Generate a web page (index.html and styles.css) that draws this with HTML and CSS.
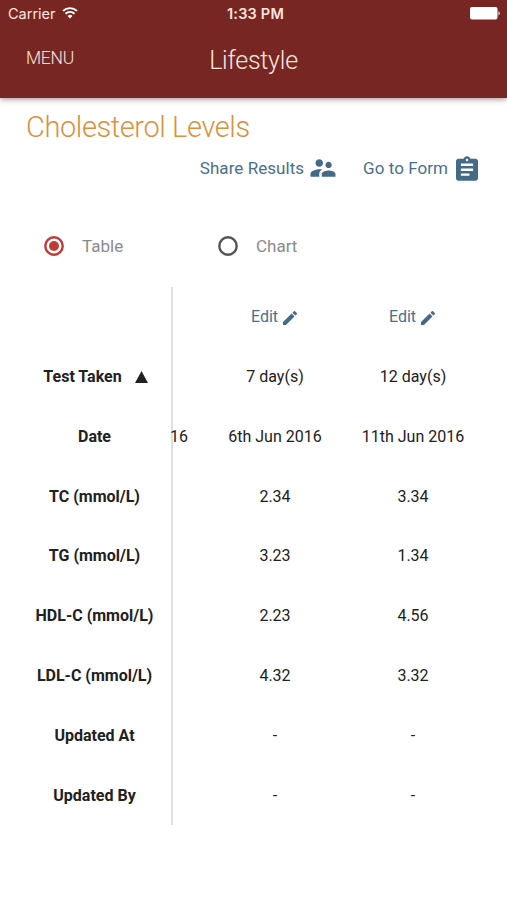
FILE: index.html
```html
<!DOCTYPE html>
<html lang="en">
<head>
<meta charset="utf-8">
<title>Lifestyle</title>
<link rel="stylesheet" href="styles.css">
</head>
<body>
<header class="header">
  <div class="status">
    <div class="carrier"><span>Carrier</span>
      <svg class="wifi" viewBox="0 0 16 12"><path d="M8 11.5 5.6 8.9a3.5 3.5 0 0 1 4.8 0z" fill="#fff"/><path d="M3.5 6.7a6.5 6.5 0 0 1 9 0M1 3.9a10.2 10.2 0 0 1 14 0" fill="none" stroke="#fff" stroke-width="1.9"/></svg>
    </div>
    <div class="clock">1:33 PM</div>
    <div class="power"><svg class="battery" viewBox="0 0 31 13"><rect width="27.5" height="12.5" rx="2" fill="#fff"/><path d="M28.5 4q2.500 2.250 0 4.500z" fill="#fff"/></svg></div>
  </div>
  <nav class="nav"><span class="menu">MENU</span><span class="title">Lifestyle</span><span></span></nav>
</header>
<main class="main">
  <h1 class="heading">Cholesterol Levels</h1>
  <div class="actions">
    <a class="action share"><span>Share Results</span><svg class="people" viewBox="0 0 24 24"><path d="M16.500 12c1.380 0 2.490-1.120 2.490-2.500S17.880 7 16.500 7 14 8.120 14 9.500s1.120 2.500 2.500 2.500zM9 11c1.660 0 2.990-1.340 2.990-3S10.660 5 9 5 6 6.340 6 8s1.340 3 3 3zm7.500 3c-1.830 0-5.500.920-5.500 2.750V19h11v-2.250c0-1.830-3.670-2.750-5.500-2.750zM9 13c-2.330 0-7 1.170-7 3.750V19h7v-2.250c0-.850.330-2.340 2.370-3.470C10.500 13.100 9.660 13 9 13z"/></svg></a>
    <a class="action form"><span>Go to Form</span><svg class="clipboard" viewBox="3 1 18 20"><path fill-rule="evenodd" d="M19 3h-4.180C14.400 1.840 13.300 1 12 1s-2.400.840-2.820 2H5c-1.100 0-2 .900-2 2v14c0 1.100.900 2 2 2h14c1.100 0 2-.900 2-2V5c0-1.100-.900-2-2-2zm-7 0c.550 0 1 .450 1 1s-.450 1-1 1-1-.450-1-1 .450-1 1-1zm2 14H7v-2h7v2zm3-4H7v-2h10v2zm0-4H7V7h10v2z"/></svg></a>
  </div>
  <div class="choices">
    <label class="choice"><svg class="radio radio-on" viewBox="0 0 20 20"><circle class="ring" cx="10" cy="10" r="8.700"/><circle class="dot" cx="10" cy="10" r="5"/></svg>Table</label>
    <label class="choice"><svg class="radio" viewBox="0 0 20 20"><circle class="ring" cx="10" cy="10" r="8.700"/></svg>Chart</label>
  </div>
  <section class="results">
    <div class="column labels">
      <div></div><div><span>Test Taken</span><svg class="sort" viewBox="0 0 13 12"><path d="M6.500 0 13 12H0z"/></svg></div><div>Date</div><div>TC (mmol/L)</div><div>TG (mmol/L)</div><div>HDL-C (mmol/L)</div><div>LDL-C (mmol/L)</div><div>Updated At</div><div>Updated By</div>
    </div>
    <div class="column clipped"><div></div><div></div><div>16</div></div>
    <div class="column">
      <div class="edit"><span>Edit</span><svg class="pencil" viewBox="3 3 18 18"><path d="M3 17.250V21h3.750L17.810 9.940l-3.750-3.750L3 17.250zM20.710 7.040c.390-.390.390-1.020 0-1.410l-2.340-2.340c-.390-.390-1.020-.390-1.410 0l-1.830 1.830 3.750 3.750 1.830-1.830z"/></svg></div><div>7 day(s)</div><div>6th Jun 2016</div><div>2.34</div><div>3.23</div><div>2.23</div><div>4.32</div><div>-</div><div>-</div>
    </div>
    <div class="column">
      <div class="edit"><span>Edit</span><svg class="pencil" viewBox="3 3 18 18"><path d="M3 17.250V21h3.750L17.810 9.940l-3.750-3.750L3 17.250zM20.710 7.040c.390-.390.390-1.020 0-1.410l-2.340-2.340c-.390-.390-1.020-.390-1.410 0l-1.830 1.830 3.750 3.750 1.830-1.830z"/></svg></div><div>12 day(s)</div><div>11th Jun 2016</div><div>3.34</div><div>1.34</div><div>4.56</div><div>3.32</div><div>-</div><div>-</div>
    </div>
  </section>
</main>
</body>
</html>
```
FILE: styles.css
```css
* { box-sizing: border-box; }
body { margin: 0; height: 900px; background: #fff; color: #212121; font-family: Roboto, sans-serif; font-size: 16px; overflow: hidden; }
.header { height: 98px; background: #772624; color: #fbe6df; box-shadow: 0 1px 6px rgba(60, 20, 40, .5); }
.status { display: grid; grid-template-columns: 1fr auto 1fr; height: 27px; align-items: center; padding: 0 6px 0 8px; font-family: Inter, sans-serif; font-size: 14.500px; }
.carrier { display: flex; align-items: center; gap: 6px; }
.wifi { width: 16px; height: 12px; margin-top: -1px; }
.clock { padding-left: 2px; font-weight: 600; font-size: 14.500px; letter-spacing: .2px; }
.power { display: flex; justify-content: flex-end; }
.battery { width: 31px; height: 13px; }
.nav { display: grid; grid-template-columns: 1fr auto 1fr; align-items: center; height: 64px; padding: 0 26px; font-weight: 300; }
.menu { padding-bottom: 2px; font-size: 17.500px; letter-spacing: -.3px; }
.title { padding-top: 2px; font-size: 25px; letter-spacing: -.25px; }
.main { padding-top: 11px; }
.heading { margin: 0 0 0 26px; font-size: 29px; line-height: 36px; font-weight: 300; letter-spacing: -.4px; color: #d9913e; }
.actions { display: flex; height: 46px; align-items: center; justify-content: flex-end; padding-right: 29px; gap: 25px; color: #4a6f8a; font-size: 17px; letter-spacing: .05px; }
.action { display: flex; align-items: center; }
.action span { padding-bottom: 1px; }
.share { gap: 4px; }
.form { gap: 8px; }
.people { width: 30px; height: 30px; }
.clipboard { width: 22px; height: 25px; }
svg { fill: #436b87; flex: none; }
.choices { display: flex; height: 96px; padding: 14px 0 0 44px; align-items: center; color: #8a8a8a; font-size: 17px; }
.choice { display: flex; align-items: center; gap: 18px; width: 174px; }
.radio { width: 20px; height: 20px; color: #555; }
.radio-on { color: #bf3b38; }
.ring { fill: none; stroke: currentColor; stroke-width: 2.400; }
.dot { fill: currentColor; }
.results { display: flex; height: 538px; }
.column { width: 138px; display: grid; grid-template-rows: repeat(9, 1fr); text-align: center; }
.column > div { display: flex; align-items: center; justify-content: center; white-space: nowrap; }
.labels { width: 173px; padding-left: 18px; font-weight: 700; border-right: 2px solid #e0e0e0; }
.labels .sort { width: 13px; height: 12px; margin: 0 -2px 0 13px; fill: #212121; }
.clipped { width: 33px; }
.column.clipped > div { justify-content: flex-start; margin-left: -3px; }
.column .edit { color: #4a6f8a; gap: 5px; padding-right: 2px; }
.pencil { width: 14px; height: 14px; margin-top: 3px; }
```
